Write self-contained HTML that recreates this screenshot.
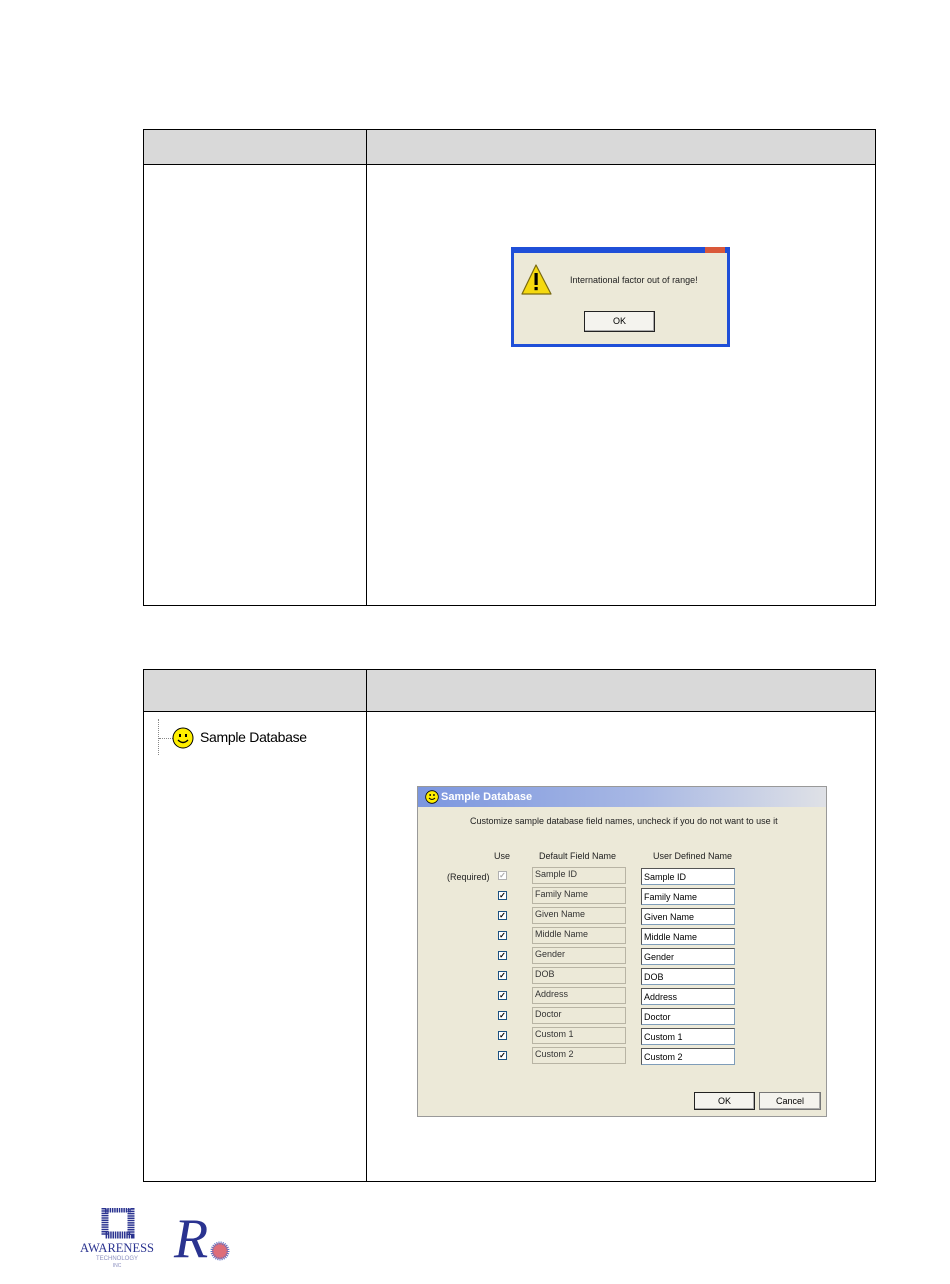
<!DOCTYPE html>
<html><head><style>
*{margin:0;padding:0;box-sizing:border-box}
body{width:950px;height:1284px;background:#fff;position:relative;font-family:"Liberation Sans",sans-serif;overflow:hidden}
.a{position:absolute}
.t{border:1px solid #000}
.hd{background:#d9d9d9}
.dlg{font-size:9px;color:#222}
.cb{position:absolute;width:9px;height:9px;border:1px solid #1c5180;background:#fff;font-size:8px;line-height:7px;text-align:center;color:#000;font-weight:bold}
.df{position:absolute;width:94px;height:17px;border:1px solid #b8b4a4;font-size:9px;padding:1px 2px;color:#333}
.uf{position:absolute;width:94px;height:17px;border:1px solid #7f9db9;border-top-color:#555;border-left-color:#555;background:#fff;font-size:9px;padding:3px 2px;color:#000}
.btn{position:absolute;border:1px solid #222;background:#f4f3ee;font-size:9px;text-align:center;line-height:16px;box-shadow:inset -1px -1px #aaa}
</style></head><body>
<div class="a t hd" style="left:143px;top:129px;width:733px;height:36px"></div>
<div class="a" style="left:143px;top:164px;width:733px;height:442px;border:1px solid #000;border-top:none"></div>
<div class="a" style="left:366px;top:129px;width:1px;height:477px;background:#000"></div>
<div class="a" style="left:511px;top:247px;width:219px;height:100px;background:#1f4fd8"></div>
<div class="a" style="left:705px;top:247px;width:20px;height:6px;background:#d9583a"></div>
<div class="a" style="left:514px;top:253px;width:213px;height:91px;background:#ece9d8"></div>
<svg class="a" style="left:521px;top:264px" width="32" height="33" viewBox="0 0 32 33"><polygon points="15,1 30,30 1,30" fill="#f5d90f" stroke="#7a6a10" stroke-width="1.2" stroke-linejoin="round"/><rect x="13.5" y="9" width="3.2" height="12" fill="#000"/><rect x="13.5" y="23" width="3.2" height="3.2" fill="#000"/></svg>
<div class="a dlg" style="left:570px;top:275px;font-size:9px">International factor out of range!</div>
<div class="btn" style="left:584px;top:311px;width:71px;height:21px;line-height:19px">OK</div>
<div class="a t hd" style="left:143px;top:669px;width:733px;height:43px"></div>
<div class="a" style="left:143px;top:711px;width:733px;height:471px;border:1px solid #000;border-top:none"></div>
<div class="a" style="left:366px;top:669px;width:1px;height:513px;background:#000"></div>
<div class="a" style="left:158px;top:719px;width:1px;height:36px;border-left:1px dotted #888"></div>
<div class="a" style="left:159px;top:738px;width:14px;height:1px;border-top:1px dotted #888"></div>
<svg class="a" style="left:172px;top:727px" width="22" height="22" viewBox="0 0 22 22"><circle cx="11" cy="11" r="10" fill="#ffef00" stroke="#000"/><rect x="7" y="7" width="2" height="3"/><rect x="13" y="7" width="2" height="3"/><path d="M6 13 Q11 18 16 13" stroke="#000" fill="none" stroke-width="1.3"/></svg>
<div class="a" style="left:200px;top:729px;font-size:14px;color:#000;letter-spacing:-0.3px">Sample Database</div>
<div class="a dlg" style="left:417px;top:786px;width:410px;height:331px;background:#ece9d8;border:1px solid #999"></div>
<div class="a" style="left:418px;top:787px;width:408px;height:20px;background:linear-gradient(90deg,#7b96df,#a8b8e4 55%,#dfe1e6)"></div>
<svg class="a" style="left:425px;top:790px" width="14" height="14" viewBox="0 0 14 14"><circle cx="7" cy="7" r="6.3" fill="#ffef00" stroke="#000" stroke-width=".8"/><rect x="4.5" y="4" width="1.3" height="2"/><rect x="8.3" y="4" width="1.3" height="2"/><path d="M4 8 Q7 11 10 8" stroke="#000" fill="none"/></svg>
<div class="a" style="left:441px;top:791px;font-size:11px;font-weight:bold;color:#fff">Sample Database</div>
<div class="a dlg" style="left:470px;top:816px">Customize sample database field names, uncheck if you do not want to use it</div>
<div class="a dlg" style="left:494px;top:851px">Use</div>
<div class="a dlg" style="left:539px;top:851px">Default Field Name</div>
<div class="a dlg" style="left:653px;top:851px">User Defined Name</div>
<div class="a dlg" style="left:447px;top:872px">(Required)</div>
<div class="cb" style="left:498px;top:871px;border-color:#b0b0b0;color:#aaa">✓</div>
<div class="cb" style="left:498px;top:891px">✓</div>
<div class="cb" style="left:498px;top:911px">✓</div>
<div class="cb" style="left:498px;top:931px">✓</div>
<div class="cb" style="left:498px;top:951px">✓</div>
<div class="cb" style="left:498px;top:971px">✓</div>
<div class="cb" style="left:498px;top:991px">✓</div>
<div class="cb" style="left:498px;top:1011px">✓</div>
<div class="cb" style="left:498px;top:1031px">✓</div>
<div class="cb" style="left:498px;top:1051px">✓</div>
<div class="df" style="left:532px;top:867px">Sample ID</div><div class="uf" style="left:641px;top:868px">Sample ID</div>
<div class="df" style="left:532px;top:887px">Family Name</div><div class="uf" style="left:641px;top:888px">Family Name</div>
<div class="df" style="left:532px;top:907px">Given Name</div><div class="uf" style="left:641px;top:908px">Given Name</div>
<div class="df" style="left:532px;top:927px">Middle Name</div><div class="uf" style="left:641px;top:928px">Middle Name</div>
<div class="df" style="left:532px;top:947px">Gender</div><div class="uf" style="left:641px;top:948px">Gender</div>
<div class="df" style="left:532px;top:967px">DOB</div><div class="uf" style="left:641px;top:968px">DOB</div>
<div class="df" style="left:532px;top:987px">Address</div><div class="uf" style="left:641px;top:988px">Address</div>
<div class="df" style="left:532px;top:1007px">Doctor</div><div class="uf" style="left:641px;top:1008px">Doctor</div>
<div class="df" style="left:532px;top:1027px">Custom 1</div><div class="uf" style="left:641px;top:1028px">Custom 1</div>
<div class="df" style="left:532px;top:1047px">Custom 2</div><div class="uf" style="left:641px;top:1048px">Custom 2</div>
<div class="btn" style="left:694px;top:1092px;width:61px;height:18px">OK</div>
<div class="btn" style="left:759px;top:1092px;width:62px;height:18px;border-color:#777">Cancel</div>
<svg class="a" style="left:78px;top:1208px" width="78" height="60" viewBox="0 0 78 60">
<rect x="27" y="1" width="26" height="26" fill="none" stroke="#2a3390" stroke-width="7" stroke-dasharray="1.5 0.8"/>
<rect x="33" y="7" width="14" height="14" fill="#fff"/>
<text x="39" y="44" font-family="Liberation Serif" font-size="13" fill="#2a3390" text-anchor="middle" textLength="74" lengthAdjust="spacingAndGlyphs">AWARENESS</text>
<text x="39" y="52" font-family="Liberation Sans" font-size="6" fill="#8c90c0" text-anchor="middle">TECHNOLOGY</text>
<text x="39" y="59" font-family="Liberation Sans" font-size="5" fill="#8c90c0" text-anchor="middle">INC</text>
</svg>
<svg class="a" style="left:170px;top:1205px" width="62" height="64" viewBox="0 0 62 64">
<text x="4" y="52" font-family="Liberation Serif" font-style="italic" font-size="56" fill="#2a3390">R</text>
<circle cx="50" cy="46" r="8" fill="#d03040" opacity=".7"/>
<circle cx="50" cy="46" r="8" fill="none" stroke="#6070c0" stroke-dasharray="1 1" stroke-width="3"/>
</svg>
</body></html>
